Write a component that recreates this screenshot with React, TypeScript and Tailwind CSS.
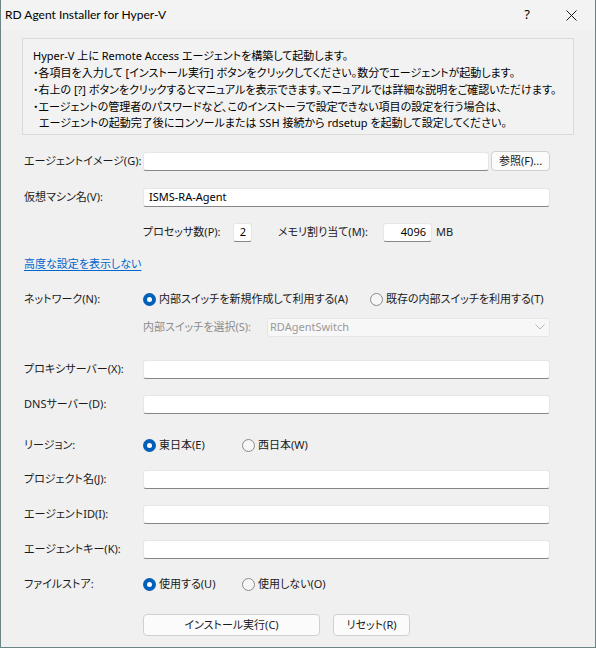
import React from "react";

const jp = "font-['Noto_Sans','Noto_Sans_CJK_JP',sans-serif] [font-feature-settings:'palt']";

function TextBox({ value = "", className = "", align = "left" }: { value?: string; className?: string; align?: "left" | "right" }) {
  return (
    <div
      className={`flex h-[19px] items-center rounded-[3px] border border-[#e6e6e6] border-b-[#868686] bg-white px-[5px] text-[11px] text-black ${
        align === "right" ? "justify-end" : ""
      } ${className}`}
    >
      {value}
    </div>
  );
}

function Radio({ checked, label }: { checked?: boolean; label: string }) {
  return (
    <div className="flex items-center gap-[3px]">
      {checked ? (
        <span className="flex size-[13px] items-center justify-center rounded-full bg-[#005fb8]">
          <span className="size-[5px] rounded-full bg-white" />
        </span>
      ) : (
        <span className="size-[13px] rounded-full border border-[#8a8a8a] bg-[#f6f6f6]" />
      )}
      <span>{label}</span>
    </div>
  );
}

function Row({ label, children, className = "" }: { label: string; children: React.ReactNode; className?: string }) {
  return (
    <div className={`flex h-5 items-center ${className}`}>
      <div className="w-[119px] shrink-0">{label}</div>
      <div className="flex min-w-0 flex-1 items-center">{children}</div>
    </div>
  );
}

export default function App() {
  return (
    <div className={`flex h-[648px] w-[596px] flex-col whitespace-nowrap border-x border-b border-[#6b8585] bg-[#f0f0f0] text-[11px] text-[#1a1a1a] ${jp}`}>
      <div className="flex h-[30px] shrink-0 items-center bg-[#f3f3f3] pl-[4px]">
        <span className="flex-1 font-['Lato',sans-serif] text-[12px] text-black">RD Agent Installer for Hyper-V</span>
        <span className="mr-[36px] text-[13px] text-black">?</span>
        <svg width="11" height="11" viewBox="0 0 11 11" className="mr-[18px]">
          <path d="M0.5 0.5 L10.5 10.5 M10.5 0.5 L0.5 10.5" stroke="#1a1a1a" strokeWidth="1" />
        </svg>
      </div>

      <div className="mx-[21px] mt-[8px] border border-[#dadada] bg-[#f2f2f2] pb-[4px] pl-[10px] pt-[8px] text-black">
        <div className="h-[17px] leading-[17px]">Hyper-V 上に Remote Access エージェントを構築して起動します。</div>
        <div className="h-[17px] leading-[17px]">・各項目を入力して [インストール実行] ボタンをクリックしてください。数分でエージェントが起動します。</div>
        <div className="h-[17px] leading-[17px]">・右上の [?] ボタンをクリックするとマニュアルを表示できます。マニュアルでは詳細な説明をご確認いただけます。</div>
        <div className="h-[17px] leading-[17px]">・エージェントの管理者のパスワードなど、このインストーラで設定できない項目の設定を行う場合は、</div>
        <div className="h-[15px] pl-[6px] leading-[15px]">エージェントの起動完了後にコンソールまたは SSH 接続から rdsetup を起動して設定してください。</div>
      </div>

      <div className="flex flex-col pl-[23px] pr-[45px]">
        <Row label="エージェントイメージ(G):" className="mt-[16px]">
          <TextBox className="flex-1" />
          <div className="ml-[2px] flex h-[20px] w-[59px] items-center justify-center rounded-[4px] border border-[#d0d0d0] bg-[#fbfbfb]">
            参照(F)...
          </div>
        </Row>

        <Row label="仮想マシン名(V):" className="mt-[16px]">
          <TextBox className="flex-1" value="ISMS-RA-Agent" />
        </Row>

        <Row label="" className="mt-[15px]">
          <span className="w-[90px]">プロセッサ数(P):</span>
          <TextBox className="w-[19px]" value="2" align="right" />
          <span className="ml-[26px] w-[105px]">メモリ割り当て(M):</span>
          <TextBox className="w-[49px]" value="4096" align="right" />
          <span className="ml-[4px]">MB</span>
        </Row>

        <div className="mt-[12px] flex h-5 items-center">
          <span className="text-[#0066cc] underline underline-offset-2">高度な設定を表示しない</span>
        </div>

        <Row label="ネットワーク(N):" className="mt-[15px]">
          <div className="w-[227px]">
            <Radio checked label="内部スイッチを新規作成して利用する(A)" />
          </div>
          <Radio label="既存の内部スイッチを利用する(T)" />
        </Row>

        <Row label="" className="mt-[8px]">
          <span className="w-[124px] text-[#8c8c8c]">内部スイッチを選択(S):</span>
          <div className="flex h-[19px] flex-1 items-center justify-between rounded-[3px] border border-[#e6e6e6] bg-[#f7f7f7] pl-[2px] pr-[4px] text-[#9a9a9a]">
            <span>RDAgentSwitch</span>
            <svg width="10" height="6" viewBox="0 0 10 6">
              <path d="M0.5 0.5 L5 5 L9.5 0.5" fill="none" stroke="#b5b5b5" strokeWidth="1" />
            </svg>
          </div>
        </Row>

        <Row label="プロキシサーバー(X):" className="mt-[22px]">
          <TextBox className="flex-1" />
        </Row>

        <Row label="DNSサーバー(D):" className="mt-[15px]">
          <TextBox className="flex-1" />
        </Row>

        <Row label="リージョン:" className="mt-[21px]">
          <div className="w-[99px]">
            <Radio checked label="東日本(E)" />
          </div>
          <Radio label="西日本(W)" />
        </Row>

        <Row label="プロジェクト名(J):" className="mt-[14px]">
          <TextBox className="flex-1" />
        </Row>

        <Row label="エージェントID(I):" className="mt-[15px]">
          <TextBox className="flex-1" />
        </Row>

        <Row label="エージェントキー(K):" className="mt-[15px]">
          <TextBox className="flex-1" />
        </Row>

        <Row label="ファイルストア:" className="mt-[15px]">
          <div className="w-[99px]">
            <Radio checked label="使用する(U)" />
          </div>
          <Radio label="使用しない(O)" />
        </Row>

        <div className="mt-[20px] flex h-[22px] pl-[119px]">
          <div className="flex w-[177px] items-center justify-center rounded-[4px] border border-[#d0d0d0] bg-[#fbfbfb]">
            インストール実行(C)
          </div>
          <div className="ml-[13px] flex w-[77px] items-center justify-center rounded-[4px] border border-[#d0d0d0] bg-[#fbfbfb]">
            リセット(R)
          </div>
        </div>
      </div>
    </div>
  );
}
